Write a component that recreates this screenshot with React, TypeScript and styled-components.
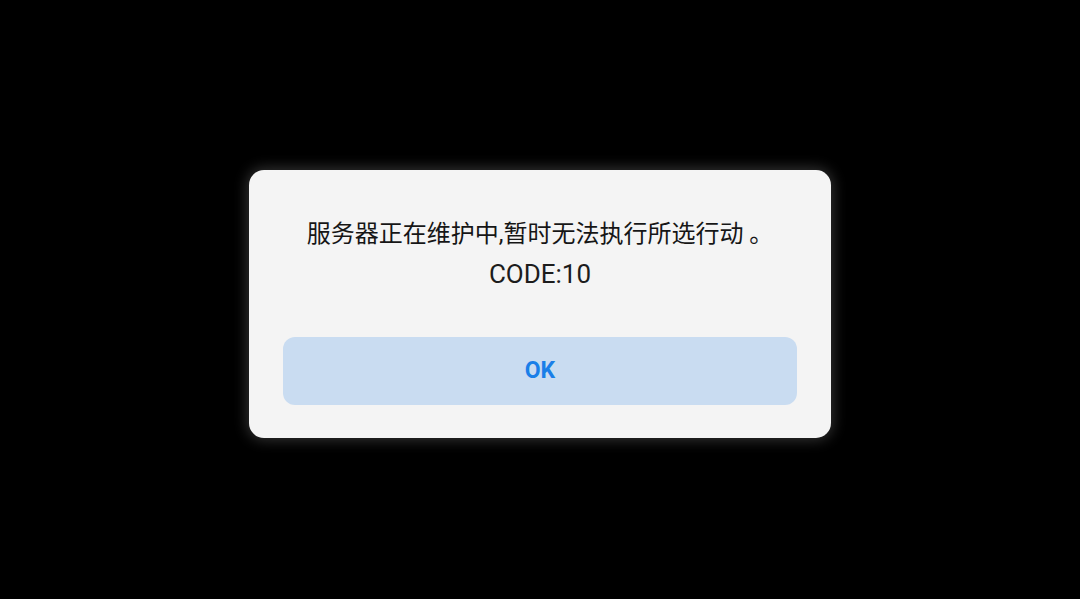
import { createGlobalStyle, styled } from "styled-components"

const GlobalStyle = createGlobalStyle`
    html, body {
        margin: 0;
        padding: 0;
        background: #000;
    }
    #root {
        height: 100vh;
    }
`

const Screen = styled.div`
    width: 100%;
    height: 100%;
    background: #000;
    display: flex;
    align-items: center;
    justify-content: center;
    font-family: Roboto, "Noto Sans CJK SC", sans-serif;
`
const Dialog = styled.div`
    box-sizing: border-box;
    width: 582px;
    height: 268px;
    margin-top: 8px;
    padding: 44px 34px 33px;
    background: #f4f4f4;
    border-radius: 15px;
    box-shadow: 0 0 14px 2px rgba(255, 255, 255, 0.2);
    display: flex;
    flex-direction: column;
`
const Message = styled.p`
    margin: 0;
    text-align: center;
    color: #161616;
    font-size: 24px;
    line-height: 40px;
`
const Code = styled.p`
    margin: 0;
    text-align: center;
    color: #1c1c1c;
    font-size: 26px;
    line-height: 40px;
`
const OkButton = styled.button`
    margin-top: auto;
    height: 68px;
    border: none;
    border-radius: 12px;
    background: #c9dcf1;
    color: #1a7fe8;
    font-family: Roboto, sans-serif;
    font-size: 23px;
    font-weight: 700;
    cursor: pointer;
`

const App = () => {
  return (
    <>
      <GlobalStyle />
      <Screen>
        <Dialog>
          <Message>服务器正在维护中,暂时无法执行所选行动 。</Message>
          <Code>CODE:10</Code>
          <OkButton>OK</OkButton>
        </Dialog>
      </Screen>
    </>
  )
}

export default App
